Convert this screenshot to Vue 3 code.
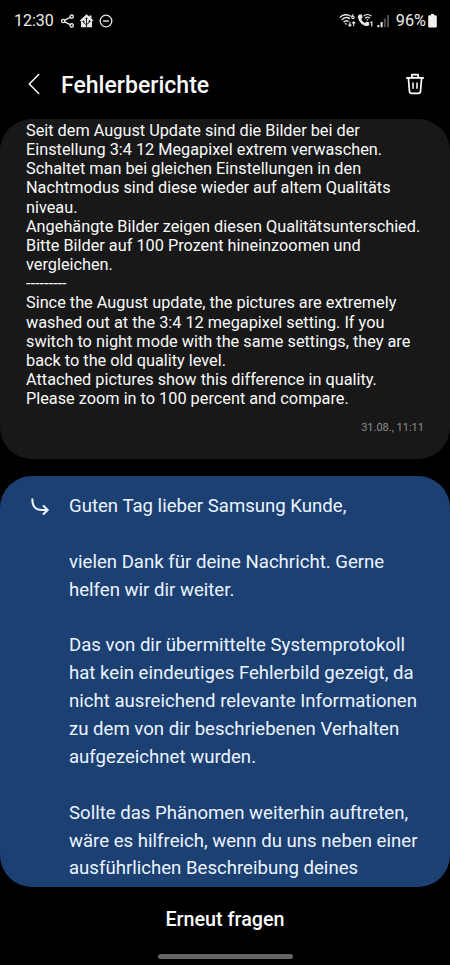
<template>
  <div class="screen">
    <div class="status-bar">
      <div class="status-left">
        <span class="clock">{{ status.time }}</span>
        <svg class="icon-share" width="14" height="14" viewBox="0 0 14 14" fill="none" stroke="#e8e8e8" stroke-width="1.4">
          <circle cx="10.7" cy="2.6" r="1.6" />
          <circle cx="2.2" cy="7" r="1.6" />
          <circle cx="10.7" cy="11.4" r="1.6" />
          <path d="M3.7 6.2L9.2 3.3M3.7 7.8L9.2 10.6" />
        </svg>
        <svg class="icon-home" width="15" height="14" viewBox="0 0 15 14">
          <path d="M7.5 0.3L10.4 2.8V1.4H12.4V4.6L14.6 7H13V13.2H2V7H0.4Z" fill="#e8e8e8" />
          <path d="M7.5 4.5V13M7.5 11L4.6 8.6V7.2M7.5 10.6L10.4 8.4V7" fill="none" stroke="#111" stroke-width="0.9" />
          <circle cx="7.5" cy="4.4" r="1" fill="#111" />
          <circle cx="4.5" cy="7.4" r="1" fill="#111" />
          <circle cx="10.5" cy="7.2" r="1" fill="#111" />
        </svg>
        <svg class="icon-dnd" width="14" height="14" viewBox="0 0 14 14" fill="none" stroke="#e8e8e8" stroke-width="1.3">
          <circle cx="7" cy="7" r="5.8" />
          <path d="M4 7H10" stroke-width="1.4" />
        </svg>
      </div>
      <div class="status-right">
        <svg class="icon-wifi" width="18" height="15" viewBox="0 0 18 15" fill="none" stroke="#e8e8e8" stroke-width="1.4">
          <path d="M0.8 4.6C3.6 1.4 8.4 0.8 11.6 3.2" />
          <path d="M2.7 7C5 4.4 8.4 4 11 5.8" />
          <path d="M4.6 9.2C6 7.6 8 7.4 9.6 8.4" />
          <path d="M5.4 10.2L7 12L8.3 10.4Z" fill="#e8e8e8" stroke="none" />
          <path d="M14.8 1.7C13.4 1.6 12.8 2.6 12.8 4" stroke-width="1.1" />
          <circle cx="14" cy="4.4" r="1.2" stroke-width="1.1" />
          <path d="M10.9 8.8V13M9.4 11.6L10.9 13.2L12.4 11.6M14.7 13.2V9M13.2 10.4L14.7 8.8L16.2 10.4" stroke-width="1.1" />
        </svg>
        <svg class="icon-call" width="18" height="15" viewBox="0 0 18 15" fill="none" stroke="#e8e8e8" stroke-width="1.2">
          <path d="M2.6 1.6L4.8 1.4L5.6 4.6L4.2 5.8C4.9 7.8 6.3 9.2 8.1 10L9.4 8.6L12.2 9.6V12C11.4 13 10 13.4 8.4 12.9C4.4 11.6 1.5 8 1 4.2C0.9 2.8 1.6 1.9 2.6 1.6Z" fill="#e8e8e8" stroke="none" />
          <path d="M6.5 3.2C8.7 0.9 12.3 0.9 14.5 3.2M8.2 5.2C9.6 3.9 11.4 3.9 12.8 5.2" />
          <path d="M9.2 6.2L10.5 7.7L11.8 6.2Z" fill="#e8e8e8" stroke="none" />
          <path d="M13.4 9.8L14.8 9V13.6" />
        </svg>
        <svg class="icon-signal" width="13" height="14" viewBox="0 0 13 14">
          <rect x="0.3" y="11" width="2" height="2.2" fill="#e8e8e8" />
          <rect x="3.6" y="8" width="2" height="5.2" fill="#e8e8e8" />
          <rect x="6.9" y="4.5" width="2" height="8.7" fill="#4c4c4c" />
          <rect x="10" y="1" width="2" height="12.2" fill="#4c4c4c" />
        </svg>
        <span class="battery-text">{{ status.battery }}</span>
        <svg class="icon-battery" width="9" height="14" viewBox="0 0 9 14">
          <path d="M3 0H6V1.2H7.6Q8.8 1.2 8.8 2.4V12.2Q8.8 13.4 7.6 13.4H1.4Q0.2 13.4 0.2 12.2V2.4Q0.2 1.2 1.4 1.2H3Z" fill="#f0f0f0" />
        </svg>
      </div>
    </div>

    <header class="app-bar">
      <button class="icon-button" aria-label="Zurück">
        <svg width="12" height="22" viewBox="0 0 12 22" fill="none" stroke="#fff" stroke-width="1.5" stroke-linecap="round" stroke-linejoin="round">
          <path d="M10.7 1.5L1.3 11L10.7 20.5" />
        </svg>
      </button>
      <h1 class="title">Fehlerberichte</h1>
      <button class="icon-button" aria-label="Löschen">
        <svg width="20" height="22" viewBox="0 0 20 22" fill="none" stroke="#fff" stroke-width="1.7" stroke-linecap="round" stroke-linejoin="round">
          <path d="M1.8 4.9H18.2M6.9 4.7V1.6H13.1V4.7" />
          <path d="M3.4 5L4.5 18.5Q4.7 20.4 6.5 20.4H13.5Q15.3 20.4 15.5 18.5L16.6 5" />
          <path d="M8 10V15.3M12 10V15.3" stroke-width="1.5" />
        </svg>
      </button>
    </header>

    <main class="messages">
      <article class="report">
        <p class="report-text">{{ reportLines.join('\n') }}</p>
        <time class="report-time">31.08., 11:11</time>
      </article>

      <article class="reply">
        <svg class="reply-icon" width="20" height="18" viewBox="0 0 20 18" fill="none" stroke="#eaf4ff" stroke-width="2" stroke-linecap="round" stroke-linejoin="round">
          <path d="M2.3 1.2C2.3 8.4 6 12 12 12H17.4" />
          <path d="M13.6 8L17.7 12L13.6 16" />
        </svg>
        <p class="reply-text">{{ replyLines.join('\n') }}</p>
      </article>
    </main>

    <footer class="footer">
      <button class="ask-button">Erneut fragen</button>
      <div class="nav-handle"></div>
    </footer>
  </div>
</template>

<script setup>
const status = { time: '12:30', battery: '96%' }

const reportLines = [
  'Seit dem August Update sind die Bilder bei der',
  'Einstellung 3:4 12 Megapixel extrem verwaschen.',
  'Schaltet man bei gleichen Einstellungen in den',
  'Nachtmodus sind diese wieder auf altem Qualitäts',
  'niveau.',
  'Angehängte Bilder zeigen diesen Qualitätsunterschied.',
  'Bitte Bilder auf 100 Prozent hineinzoomen und',
  'vergleichen.',
  '---------',
  'Since the August update, the pictures are extremely',
  'washed out at the 3:4 12 megapixel setting. If you',
  'switch to night mode with the same settings, they are',
  'back to the old quality level.',
  'Attached pictures show this difference in quality.',
  'Please zoom in to 100 percent and compare.'
]

const replyLines = [
  'Guten Tag lieber Samsung Kunde,',
  '',
  'vielen Dank für deine Nachricht. Gerne',
  'helfen wir dir weiter.',
  '',
  'Das von dir übermittelte Systemprotokoll',
  'hat kein eindeutiges Fehlerbild gezeigt, da',
  'nicht ausreichend relevante Informationen',
  'zu dem von dir beschriebenen Verhalten',
  'aufgezeichnet wurden.',
  '',
  'Sollte das Phänomen weiterhin auftreten,',
  'wäre es hilfreich, wenn du uns neben einer',
  'ausführlichen Beschreibung deines'
]
</script>

<style>
body {
  background: #000;
}
</style>

<style scoped>
.screen {
  display: flex;
  flex-direction: column;
  width: 450px;
  height: 965px;
  overflow: hidden;
  background: #000;
  color: #fafafa;
  font-family: Roboto, "Liberation Sans", sans-serif;
}

.status-bar {
  display: flex;
  justify-content: space-between;
  align-items: center;
  height: 41px;
  padding: 0 13px 0 14px;
  box-sizing: border-box;
  flex-shrink: 0;
}

.status-left,
.status-right {
  display: flex;
  align-items: center;
}

.clock,
.battery-text {
  font-size: 16px;
  line-height: 20px;
  color: #ececec;
}

.icon-share {
  margin-left: 7px;
}

.icon-home {
  margin-left: 4px;
}

.icon-dnd {
  margin-left: 5px;
}

.icon-signal {
  margin-left: 2px;
}

.battery-text {
  margin: 0 2px 0 6px;
  font-size: 16.3px;
}

.app-bar {
  display: flex;
  align-items: center;
  height: 78px;
  padding: 0 25px 0 28px;
  box-sizing: border-box;
  flex-shrink: 0;
}

.icon-button {
  display: flex;
  padding: 0;
  border: none;
  background: none;
}

.app-bar .icon-button {
  margin-top: 8px;
}

.title {
  flex: 1;
  margin: 12px 0 0 21px;
  font-size: 23.05px;
  font-weight: 500;
  line-height: 28px;
}

.messages {
  display: flex;
  flex-direction: column;
  gap: 17px;
  flex-shrink: 0;
}

.report {
  display: flex;
  flex-direction: column;
  height: 340px;
  padding: 2px 26px 0;
  box-sizing: border-box;
  border-radius: 32px;
  background: #181818;
}

.report-text {
  margin: 0;
  font-size: 16.3px;
  line-height: 19.15px;
  white-space: pre;
}

.report-time {
  align-self: flex-end;
  margin-top: 12px;
  font-size: 11px;
  line-height: 16px;
  color: #8c8c8c;
}

.reply {
  display: flex;
  height: 411px;
  padding: 16px 30px 0;
  box-sizing: border-box;
  border-radius: 32px;
  background: #1d4073;
}

.reply-icon {
  flex-shrink: 0;
  margin-top: 6px;
}

.reply-text {
  margin: 1px 0 0 19px;
  font-size: 18.6px;
  line-height: 27.87px;
  color: #eaf4ff;
  white-space: pre;
}

.footer {
  display: flex;
  flex-direction: column;
  align-items: center;
  flex: 1;
}

.ask-button {
  margin-top: 21px;
  padding: 0;
  border: none;
  background: none;
  color: #fafafa;
  font-family: inherit;
  font-size: 19.75px;
  font-weight: 500;
  line-height: 24px;
}

.nav-handle {
  width: 135px;
  height: 5px;
  margin-top: 22px;
  border-radius: 3px;
  background: #656565;
}
</style>
